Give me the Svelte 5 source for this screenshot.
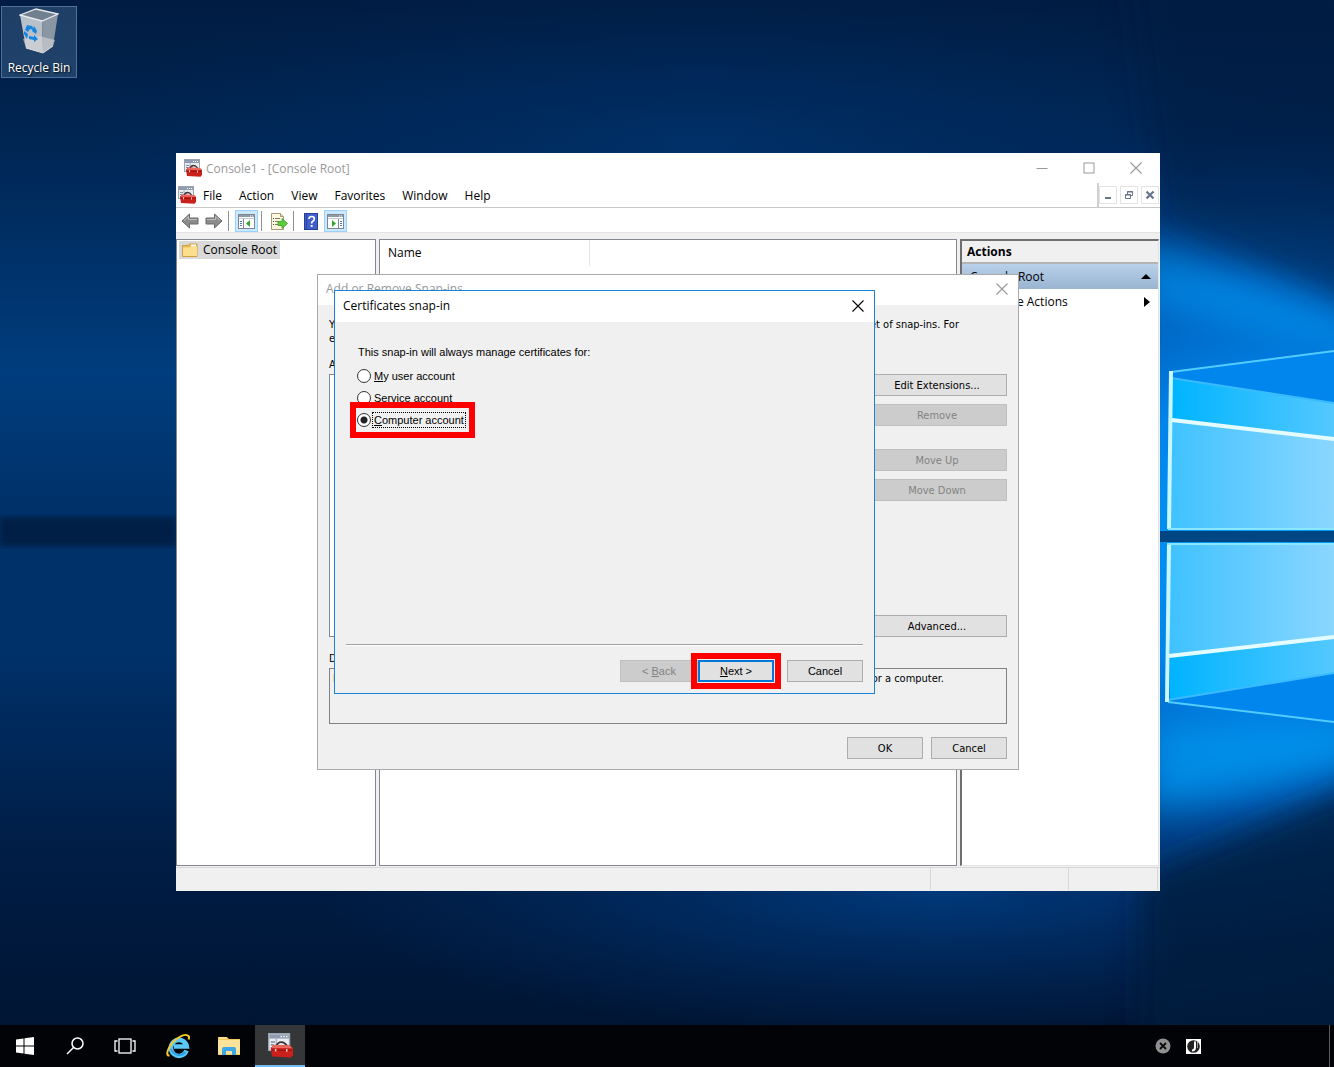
<script lang="ts">
	const menus = ['File', 'Action', 'View', 'Favorites', 'Window', 'Help'];

	const accounts = [
		{ id: 'user', key: 'M', rest: 'y user account' },
		{ id: 'service', key: 'S', rest: 'ervice account' },
		{ id: 'computer', key: 'C', rest: 'omputer account' }
	];

	let account = $state('computer');
</script>

{#snippet mmcIcon(size: number)}
	<svg width={size} height={size} viewBox="0 0 18 18" aria-hidden="true">
		<rect x="0.5" y="0.5" width="15" height="12" fill="#e9edf2" stroke="#9aa4b1" />
		<rect x="1" y="1" width="14" height="3" fill="#8e9bb0" />
		<path d="M9 2.5h1M11 2.5h1M13 2.5h1" stroke="#fff" />
		<path d="M2 6.5h3M2 8.5h2M2 10.5h2" stroke="#7d8da5" />
		<path d="M6 4v6" stroke="#aab3bf" />
		<path d="M6 9.500Q7 6.500 9.500 6.500T13.500 9" fill="none" stroke="#3b3434" stroke-width="1.300" />
		<path d="M2 11l2-2.500 12 .5 2 2v5l-1.500 1.700L3 17z" fill="#cb211c" />
		<path d="M2.500 10.800L4 8.700l11.800.3 1.700 2z" fill="#ea6a60" />
		<path d="M2.500 12.300l15 .2" stroke="#9d1410" />
		<path d="M5.500 11.300v2M13.500 11.500v2" stroke="#f3c9c5" stroke-width="1.100" />
	</svg>
{/snippet}

{#snippet closeIcon(size: number)}
	<svg width={size} height={size} viewBox="0 0 12 12" aria-hidden="true">
		<path d="M.5.5l11 11M11.500.5l-11 11" fill="none" stroke="currentColor" stroke-width="1.100" />
	</svg>
{/snippet}

{#snippet paneIcon(open: boolean)}
	<svg width="17" height="15" viewBox="0 0 17 15" aria-hidden="true">
		<rect x="0.500" y="0.500" width="16" height="14" fill="#fff" stroke="#7c8694" />
		<path d="M1 2h15" stroke="#8f9aa9" stroke-width="2" />
		<path d="M12 2h1M14 2h1" stroke="#fff" />
		<path d="M1 4.500h15" stroke="#c3cad3" />
		{#if open}
			<path d="M11.500 5v9" stroke="#7c8694" />
			<path d="M13 7.500h2M13 9.500h2M13 11.500h2" stroke="#4a7cc0" />
			<path d="M5 6l4 3.500L5 13z" fill="#36a52e" />
		{:else}
			<path d="M5.500 5v9" stroke="#7c8694" />
			<path d="M2 7.500h2M2 9.500h2M2 11.500h2" stroke="#4a7cc0" />
			<path d="M12 6L8 9.500l4 3.500z" fill="#36a52e" />
		{/if}
	</svg>
{/snippet}

<div class="desktop">
	<svg class="wallpaper" viewBox="0 0 1334 1067" preserveAspectRatio="xMaxYMid slice" aria-hidden="true">
		<defs>
			<linearGradient id="base" x1="0" y1="0" x2="0" y2="1">
				<stop offset="0" stop-color="#001c42" />
				<stop offset="0.140" stop-color="#002654" />
				<stop offset="0.350" stop-color="#003d7e" />
				<stop offset="0.480" stop-color="#003168" />
				<stop offset="0.620" stop-color="#003068" />
				<stop offset="0.800" stop-color="#001d45" />
				<stop offset="1" stop-color="#00132f" />
			</linearGradient>
			<radialGradient id="glow" gradientUnits="userSpaceOnUse" cx="1270" cy="540" r="470" gradientTransform="translate(1270 540) scale(1 .92) translate(-1270 -540)">
				<stop offset="0" stop-color="#00a0ff" />
				<stop offset="0.350" stop-color="#0084ea" />
				<stop offset="0.600" stop-color="#0068c8" stop-opacity="0.800" />
				<stop offset="0.850" stop-color="#003f86" stop-opacity="0.350" />
				<stop offset="1" stop-color="#002a60" stop-opacity="0" />
			</radialGradient>
			<radialGradient id="floor" cx="0.500" cy="0.500" r="0.500">
				<stop offset="0" stop-color="#004a9c" stop-opacity="0.800" />
				<stop offset="1" stop-color="#003a80" stop-opacity="0" />
			</radialGradient>
			<linearGradient id="pane" x1="0" y1="0" x2="1" y2="0">
				<stop offset="0" stop-color="#3fc2ff" />
				<stop offset="1" stop-color="#8ad6ff" />
			</linearGradient>
			<linearGradient id="ray" x1="0" y1="0" x2="1" y2="0">
				<stop offset="0" stop-color="#00b4ff" />
				<stop offset="1" stop-color="#54c8ff" />
			</linearGradient>
			<filter id="soft" x="-50%" y="-50%" width="200%" height="200%"><feGaussianBlur stdDeviation="16" /></filter>
			<filter id="edge"><feGaussianBlur stdDeviation="2" /></filter>
		</defs>
		<rect width="1334" height="1067" fill="url(#base)" />
		<ellipse cx="940" cy="890" rx="620" ry="150" fill="url(#floor)" opacity="0.800" />
		<ellipse cx="700" cy="140" rx="620" ry="170" fill="url(#floor)" opacity="0.350" />
		<rect width="1334" height="1067" fill="url(#glow)" />
		<path d="M1130-20h260v345L1160 215z" fill="#001c42" opacity="0.500" filter="url(#soft)" />
		<path d="M1380 775L1140 875v180h240z" fill="#001a3e" opacity="0.800" filter="url(#soft)" />
		<path d="M1140 240l230 85v30l-230-50z" fill="#00a0ff" opacity="0.500" filter="url(#soft)" />
		<path d="M1150 725l220-5v40l-220 50z" fill="#00a6ff" opacity="0.600" filter="url(#soft)" />
		<rect y="517" width="176" height="29" fill="#001d42" opacity="0.850" filter="url(#edge)" />
		<rect x="1150" y="531" width="190" height="11" fill="#004682" />
		<path d="M1172 371l162-20v52l-162-24z" fill="#0086ec" />
		<path d="M1172 378l162 25v38l-162-21z" fill="url(#ray)" />
		<path d="M1172 421l162 19v89h-164z" fill="url(#pane)" />
		<path d="M1170 544h164v93l-164 18z" fill="url(#pane)" />
		<path d="M1170 656l164-19v37l-164 26z" fill="url(#ray)" />
		<path d="M1170 700l164-27v49l-164-20z" fill="#0086ec" />
		<g fill="none" stroke="#c9f7ff">
			<path d="M1171 372l163-21M1168 702l166 20" stroke="#52ccff" stroke-width="2" />
			<path d="M1171 378l163 25M1168 700l166-27" stroke="#3abaff" stroke-width="2" />
			<path d="M1171 371l-2 158" stroke-width="4" />
			<path d="M1169 544l-2 158" stroke-width="4" />
			<path d="M1168 529h166M1167 544h167" stroke="#8ce6ff" stroke-width="2" />
			<path d="M1172 420l162 19M1169 656l165-19" stroke="#e4fbff" stroke-width="4" />
		</g>
	</svg>

	<main class="workspace">
		<button class="shortcut" type="button">
			<svg width="40" height="46" viewBox="0 0 40 46" aria-hidden="true">
				<path d="M1 7l22 6 1 32-17-5z" fill="#b8c0ca" />
				<path d="M39 6l-16 7 1 32 10-7z" fill="#8a96a4" />
				<path d="M4 31l16-3 16 4-2 6-10 7-17-5z" fill="#d5d7d9" opacity="0.600" />
				<path d="M1 7L17 1l22 5-16 7z" fill="#71808f" stroke="#e6eaee" stroke-width="1.300" />
				<path d="M7 40l17 5 10-7" fill="none" stroke="#d6dade" />
				<g fill="#1685de">
					<path d="M8 17l5 1 2 4-4-1-2 3-3-2z" />
					<path d="M15 18l3 5-1 3-4-3z" />
					<path d="M5 23l4 3-1 5-3-5z" />
					<path d="M10 28l5 1v-2l4 4-4 3v-2l-5-1z" />
				</g>
			</svg>
			<span>Recycle Bin</span>
		</button>

		<section class="console" aria-label="Console1">
			<header class="titlebar">
				{@render mmcIcon(18)}
				<h1>Console1 - [Console Root]</h1>
				<div class="window-buttons">
					<button type="button" aria-label="Minimize">
						<svg width="12" height="12" viewBox="0 0 12 12"><path d="M.5 6.500h11" stroke="currentColor" /></svg>
					</button>
					<button type="button" aria-label="Maximize">
						<svg width="12" height="12" viewBox="0 0 12 12"><rect x="1" y="1" width="10" height="10" fill="none" stroke="currentColor" /></svg>
					</button>
					<button type="button" aria-label="Close">{@render closeIcon(12)}</button>
				</div>
			</header>

			<nav class="menubar">
				{@render mmcIcon(18)}
				<div class="menus">
					{#each menus as menu (menu)}
						<button type="button">{menu}</button>
					{/each}
				</div>
				<div class="child-buttons">
					<button type="button" aria-label="Minimize child window">
						<svg width="10" height="10" viewBox="0 0 10 10"><path d="M2 8h6" stroke="currentColor" stroke-width="2" /></svg>
					</button>
					<button type="button" aria-label="Restore child window">
						<svg width="10" height="10" viewBox="0 0 10 10">
							<path d="M3.500 4V1.500h5v4H7M3 2h6" fill="none" stroke="currentColor" />
							<path d="M1.500 4.500h5v4h-5zM1 5h6" fill="none" stroke="currentColor" />
						</svg>
					</button>
					<button type="button" aria-label="Close child window">
						<svg width="10" height="10" viewBox="0 0 10 10"><path d="M1.500 1.500l7 7M8.500 1.500l-7 7" stroke="currentColor" stroke-width="2.200" /></svg>
					</button>
				</div>
			</nav>

			<div class="toolbar">
				<button type="button" aria-label="Back">
					<svg width="18" height="16" viewBox="0 0 18 16">
						<path d="M1 8l7.500-7v4H17v6H8.500v4z" fill="#8b8b8b" stroke="#6b6b6b" />
						<path d="M3 7.500L7.500 3.500V6.500H16" fill="none" stroke="#bdbdbd" />
					</svg>
				</button>
				<button type="button" aria-label="Forward">
					<svg width="18" height="16" viewBox="0 0 18 16">
						<path d="M17 8L9.500 1v4H1v6h8.500v4z" fill="#8b8b8b" stroke="#6b6b6b" />
						<path d="M2 6.500h8.500V3.500L15 7.500" fill="none" stroke="#bdbdbd" />
					</svg>
				</button>
				<span class="separator"></span>
				<button class="active" type="button" aria-label="Show console tree">{@render paneIcon(false)}</button>
				<span class="separator"></span>
				<button type="button" aria-label="Export list">
					<svg width="18" height="17" viewBox="0 0 18 17">
						<path d="M1.500.5h9l3 3v13h-12z" fill="#fdf8dd" stroke="#a49b80" />
						<path d="M10.500.5v3h3" fill="#e4dcc0" stroke="#a49b80" />
						<path d="M3 5.500h1M3 8.500h1M3 11.500h1" stroke="#444" />
						<path d="M5 5.500h5M5 8.500h4M5 11.500h4" stroke="#777" />
						<path d="M8 8.500h4V5.500l5.500 5-5.500 5v-3H8z" fill="#5ccb3c" stroke="#37a01e" stroke-width="0.800" />
					</svg>
				</button>
				<span class="separator"></span>
				<button type="button" aria-label="Help">
					<svg width="14" height="17" viewBox="0 0 14 17">
						<rect x="0.500" y="0.500" width="13" height="16" fill="#3f5fca" stroke="#2a3f98" />
						<path d="M2.500 1v15" stroke="#2e489f" />
						<path d="M5 6q0-2.500 2.700-2.500T10.300 6Q10.300 7.500 8.500 8.500 7.600 9 7.600 10.500" fill="none" stroke="#fff" stroke-width="1.700" />
						<rect x="6.700" y="12" width="1.900" height="1.900" fill="#fff" />
					</svg>
				</button>
				<button class="active" type="button" aria-label="Show action pane">{@render paneIcon(true)}</button>
			</div>

			<div class="panes">
				<div class="pane tree">
					<button class="node" type="button">
						<svg width="16" height="14" viewBox="0 0 16 14" aria-hidden="true">
							<path d="M.5 2.500h6l1-1.500h7.500v12.500H.5z" fill="#e9bd57" stroke="#d0a03c" />
							<path d="M9 1.500h5v2H9z" fill="#fff" />
							<path d="M1 4.500h7l1-1h6v9.500H1z" fill="#fbdf8f" />
						</svg>
						<span>Console Root</span>
					</button>
				</div>
				<div class="pane list">
					<div class="column">Name</div>
				</div>
				<aside class="pane actions">
					<h2>Actions</h2>
					<button class="group" type="button">
						<span>Console Root</span>
						<svg width="10" height="5" viewBox="0 0 10 5" aria-hidden="true"><path d="M0 5l5-5 5 5z" /></svg>
					</button>
					<button class="action" type="button">
						<span>More Actions</span>
						<svg width="10" height="10" viewBox="0 0 10 10" aria-hidden="true"><path d="M3 0l6 5-6 5z" /></svg>
					</button>
				</aside>
			</div>

			<footer class="statusbar">
				<span></span>
				<span class="wide"></span>
				<span class="narrow"></span>
			</footer>
		</section>

		<section class="dialog snapins" aria-label="Add or Remove Snap-ins">
			<header>
				<h2>Add or Remove Snap-ins</h2>
				<button type="button" aria-label="Close">{@render closeIcon(12)}</button>
			</header>
			<div class="content">
				<p class="intro">
					<span>You can select snap-ins for this console from those available on your computer and configure</span>
					<span>the selected set of snap-ins. For</span>
				</p>
				<p class="intro">extensible snap-ins, you can configure which extensions are enabled.</p>
				<h3>Available snap-ins:</h3>
				<div class="picker">
					<div class="available"></div>
					<div class="side">
						<button class="push" type="button">Edit Extensions...</button>
						<button class="push" type="button" disabled>Remove</button>
						<div class="moves">
							<button class="push" type="button" disabled>Move Up</button>
							<button class="push" type="button" disabled>Move Down</button>
						</div>
						<button class="push" type="button">Advanced...</button>
					</div>
				</div>
				<h3 class="description-title">Description:</h3>
				<p class="description">
					<span>Browse certificate stores for yourself, a service,</span>
					<span>or a computer.</span>
				</p>
				<div class="buttons">
					<button class="push" type="button">OK</button>
					<button class="push" type="button">Cancel</button>
				</div>
			</div>
		</section>

		<section class="dialog certificates" aria-label="Certificates snap-in">
			<header>
				<h2>Certificates snap-in</h2>
				<button type="button" aria-label="Close">{@render closeIcon(12)}</button>
			</header>
			<form class="wizard" onsubmit={(e) => e.preventDefault()}>
				<fieldset>
					<legend>This snap-in will always manage certificates for:</legend>
					{#each accounts as a (a.id)}
						<label class:marked={a.id === 'computer'}>
							<input type="radio" name="account" value={a.id} bind:group={account} />
							<span><u>{a.key}</u>{a.rest}</span>
						</label>
					{/each}
				</fieldset>
				<div class="wizard-buttons">
					<button class="push back" type="button" disabled><span>&lt; <u>B</u>ack</span></button>
					<button class="push next marked" type="submit"><span><u>N</u>ext &gt;</span></button>
					<button class="push cancel" type="button">Cancel</button>
				</div>
			</form>
		</section>
	</main>

	<footer class="taskbar">
		<div class="system">
			<button type="button" aria-label="Start">
				<svg width="18" height="18" viewBox="0 0 18 18" fill="#fff">
					<path d="M0 2.500L7.500 1.500v7H0zM8.500 1.300L18 0v8.500H8.500zM0 9.500h7.500v7L0 15.500zM8.500 9.500H18V18l-9.500-1.300z" />
				</svg>
			</button>
			<button type="button" aria-label="Search">
				<svg width="18" height="18" viewBox="0 0 18 18" fill="none" stroke="#fff" stroke-width="1.500">
					<circle cx="11.500" cy="6.500" r="5.500" />
					<path d="M7.500 10.500L1 17" />
				</svg>
			</button>
			<button type="button" aria-label="Task View">
				<svg width="22" height="16" viewBox="0 0 22 16" fill="none" stroke="#fff" stroke-width="1.300">
					<rect x="5" y="1" width="12" height="14" />
					<path d="M3.500 3H1v10h2.500M18.500 3H21v10h-2.500" />
				</svg>
			</button>
		</div>
		<div class="apps">
			<button type="button" aria-label="Internet Explorer">
				<svg width="26" height="26" viewBox="0 0 26 26" fill="none">
					<path d="M21.500 17.500A8 8 0 1 1 21.800 13.500H9" stroke="#5cc8f8" stroke-width="4.500" />
					<path d="M20.500 19A8.500 8.500 0 0 1 6 16" stroke="#2ba2e6" stroke-width="2" />
					<path d="M4.500 22.500Q1 23 3 17 6 9.500 13 5t9.500-2.500Q25 3 23.500 6.500" stroke="#fbc926" stroke-width="2" />
				</svg>
			</button>
			<button type="button" aria-label="File Explorer">
				<svg width="24" height="20" viewBox="0 0 24 20">
					<path d="M1 1h9l2 2h11v16H1z" fill="#f2c860" />
					<path d="M1 4h22v14H1z" fill="#fce39a" />
					<path d="M2 2h7" stroke="#fff5cf" />
					<path d="M5 19v-6q0-2 2-2h10q2 0 2 2v6h-4v-4H9v4z" fill="#3ba7e4" />
				</svg>
			</button>
			<button class="running" type="button" aria-label="Console1">{@render mmcIcon(25)}</button>
		</div>
		<div class="tray">
			<svg width="16" height="16" viewBox="0 0 16 16" aria-hidden="true">
				<circle cx="8" cy="8" r="7.500" fill="#8f8f8f" />
				<path d="M5 5l6 6M11 5l-6 6" stroke="#0a0a0a" stroke-width="1.800" />
			</svg>
			<svg width="15" height="15" viewBox="0 0 15 15" aria-hidden="true">
				<rect width="15" height="15" fill="#fff" />
				<circle cx="7.500" cy="7.500" r="6.300" fill="#222" />
				<path d="M9 2.500v6q0 3-3 3" fill="none" stroke="#fff" stroke-width="2" />
				<path d="M11.500 3v6" stroke="#999" />
			</svg>
			<button class="show-desktop" type="button" aria-label="Show desktop"></button>
		</div>
	</footer>
</div>

<style>
	:global(body) {
		margin: 0;
	}
	.desktop {
		position: relative;
		display: flex;
		flex-direction: column;
		min-height: 100vh;
		overflow: hidden;
		background: #001c42;
		color: #000;
		font: 12px/16px 'Open Sans', 'Noto Sans', sans-serif;
	}
	.wallpaper {
		position: absolute;
		inset: 0;
		width: 100%;
		height: 100%;
	}
	.workspace {
		position: relative;
		flex: 1;
	}
	button {
		display: flex;
		align-items: center;
		justify-content: center;
		margin: 0;
		padding: 0;
		border: 0;
		background: none;
		color: inherit;
		font: inherit;
		white-space: nowrap;
	}
	h1,
	h2,
	h3,
	p {
		margin: 0;
		font-size: inherit;
		font-weight: 400;
	}
	svg {
		flex: none;
	}

	.shortcut {
		position: absolute;
		left: 1px;
		top: 6px;
		flex-direction: column;
		gap: 6px;
		width: 76px;
		height: 72px;
		border: 1px solid #4f7398;
		background: rgba(90, 130, 170, 0.35);
		color: #fff;
		text-shadow: 1px 1px 2px #000;
	}

	.console {
		position: absolute;
		inset: 153px 174px 134px 176px;
		display: flex;
		flex-direction: column;
		background: #f0f0f0;
	}
	.titlebar {
		display: flex;
		align-items: center;
		gap: 4px;
		height: 30px;
		padding-left: 8px;
		background: #fff;
		color: #999;
	}
	.titlebar h1,
	.menus {
		padding-top: 2px;
	}
	.window-buttons {
		display: flex;
		margin-left: auto;
		padding-right: 1px;
	}
	.window-buttons button {
		width: 47px;
		height: 30px;
	}
	.menubar {
		display: flex;
		align-items: center;
		height: 24px;
		padding-left: 2px;
		border-bottom: 1px solid #c8c8c8;
		background: #fff;
	}
	.menus {
		display: flex;
		gap: 17px;
		margin-left: 7px;
	}
	.child-buttons {
		display: flex;
		align-items: center;
		align-self: stretch;
		gap: 3px;
		margin-left: auto;
		padding-right: 1px;
		border-left: 2px solid #d0d0d0;
		color: #66758a;
	}
	.child-buttons button {
		box-sizing: border-box;
		width: 18px;
		height: 18px;
		border: 1px solid #e3e3e3;
	}
	.toolbar {
		display: flex;
		align-items: flex-end;
		gap: 2px;
		height: 24px;
		padding-left: 3px;
		border-bottom: 1px solid #e3e3e3;
		background: #fff;
	}
	.toolbar button {
		box-sizing: border-box;
		width: 22px;
		height: 22px;
	}
	.toolbar .active {
		width: 23px;
		border: 1px solid #99d1ff;
		background: #cce8ff;
	}
	.separator {
		width: 1px;
		height: 20px;
		margin: 0 4px 1px 1px;
		background: #909090;
	}
	.panes {
		display: flex;
		flex: 1;
		gap: 3px;
		margin-top: 6px;
		padding-right: 1px;
	}
	.pane {
		box-sizing: border-box;
		border: 1px solid #828790;
		background: #fff;
	}
	.tree {
		width: 200px;
		padding: 1px 2px;
	}
	.node {
		gap: 5px;
		height: 18px;
		padding: 0 3px;
		background: #d9d9d9;
	}
	.list {
		flex: 1;
	}
	.column {
		width: 201px;
		height: 26px;
		padding-left: 8px;
		border-right: 1px solid #e5e5e5;
		line-height: 26px;
	}
	.actions {
		width: 199px;
		border-width: 2px 1px 1px 2px;
		border-color: #6e6e6e #e3e3e3 #e3e3e3 #6e6e6e;
	}
	.actions h2 {
		height: 21px;
		padding-left: 5px;
		border-bottom: 2px solid #b4b4b4;
		background: #f0f0f0;
		font-weight: 700;
		line-height: 21px;
	}
	.group,
	.action {
		justify-content: space-between;
		width: 100%;
		height: 25px;
		padding: 0 7px 0 8px;
	}
	.group {
		background: linear-gradient(#b9d1ea, #99b4d1);
	}
	.action {
		padding-left: 32px;
	}
	.statusbar {
		display: flex;
		height: 22px;
		margin-top: 1px;
		padding: 0 2px 1px 0;
		border-top: 1px solid #d7d7d7;
	}
	.statusbar span {
		flex: 1;
		border-right: 1px solid #d7d7d7;
	}
	.statusbar .wide {
		flex: none;
		width: 137px;
	}
	.statusbar .narrow {
		flex: none;
		width: 88px;
	}

	.dialog {
		position: absolute;
		box-sizing: border-box;
		border: 1px solid #aaa;
		background: #f0f0f0;
	}
	.dialog header {
		box-sizing: border-box;
		display: flex;
		align-items: center;
		justify-content: space-between;
		height: 30px;
		padding: 0 10px 2px 8px;
		background: #fff;
	}
	.snapins {
		left: 317px;
		top: 274px;
		width: 702px;
		font: 11px/14px 'DejaVu Sans Condensed', 'DejaVu Sans', sans-serif;
	}
	.snapins header {
		color: #999;
		font: 12px/16px 'Open Sans', 'Noto Sans', sans-serif;
	}
	.content {
		padding: 13px 11px 10px;
	}
	.intro,
	.description {
		display: flex;
		justify-content: space-between;
		white-space: nowrap;
	}
	.intro {
		padding-right: 48px;
	}
	h3 {
		margin: 12px 0 2px;
	}
	.picker {
		display: flex;
		align-items: stretch;
		gap: 8px;
	}
	.available {
		flex: 1;
		border: 1px solid #828790;
		background: #fff;
	}
	.side {
		display: flex;
		flex-direction: column;
		gap: 8px;
		width: 140px;
	}
	.push {
		box-sizing: border-box;
		width: 76px;
		height: 22px;
		border: 1px solid #adadad;
		background: #e1e1e1;
	}
	.push:disabled {
		border-color: #bfbfbf;
		background: #ccc;
		color: #838383;
	}
	.snapins .push {
		padding-top: 2px;
	}
	.side .push {
		width: 100%;
	}
	.moves {
		display: flex;
		flex-direction: column;
		gap: 8px;
		margin: 15px 0 106px;
	}
	.description-title {
		margin: 15px 0 2px;
	}
	.description {
		height: 50px;
		padding: 3px 62px 1px 3px;
		border: 1px solid #828282;
	}
	.buttons {
		display: flex;
		justify-content: flex-end;
		gap: 8px;
		margin-top: 13px;
	}

	.certificates {
		left: 334px;
		top: 290px;
		width: 541px;
		border-color: #1883d7;
		font: 11px/14px 'Liberation Sans', Arial, sans-serif;
	}
	.certificates header {
		height: 31px;
		font: 12px/16px 'Open Sans', 'Noto Sans', sans-serif;
	}
	.wizard {
		padding: 23px 11px 11px;
	}
	fieldset {
		display: flex;
		flex-direction: column;
		align-items: flex-start;
		min-height: 299px;
		margin: 0;
		padding: 0 0 0 11px;
		border: 0;
	}
	legend {
		padding: 0 0 6px 1px;
	}
	label {
		display: flex;
		align-items: center;
		gap: 2px;
		height: 22px;
		padding-right: 3px;
	}
	label span {
		padding: 0 1px;
	}
	input[type='radio'] {
		appearance: none;
		box-sizing: border-box;
		width: 14px;
		height: 14px;
		margin: 0;
		border: 1px solid #333;
		border-radius: 50%;
		background: #fff;
	}
	input:checked {
		background: radial-gradient(circle, #222 3px, #fff 4px);
	}
	input:checked + span {
		outline: 1px dotted #000;
	}
	.marked {
		outline: 6px solid #f00;
		outline-offset: 1px;
	}
	.wizard-buttons {
		display: flex;
		justify-content: flex-end;
		padding-top: 15px;
		border-top: 1px solid #a0a0a0;
		box-shadow: inset 0 1px #fff;
	}
	.back {
		width: 78px;
	}
	.next {
		border: 2px solid #0078d7;
	}
	.cancel {
		margin-left: 13px;
	}

	.taskbar {
		position: relative;
		display: flex;
		height: 42px;
		background: #010306;
	}
	.system {
		display: flex;
		margin-right: 3px;
	}
	.apps {
		display: flex;
		gap: 1px;
	}
	.taskbar button {
		width: 50px;
		height: 42px;
	}
	.taskbar .running {
		border-bottom: 2px solid #76b9ed;
		background: #343638;
	}
	.tray {
		display: flex;
		align-items: center;
		gap: 15px;
		margin-left: auto;
	}
	.tray .show-desktop {
		width: 5px;
		margin-left: 113px;
		border-left: 1px solid #5a5a5a;
	}
</style>
